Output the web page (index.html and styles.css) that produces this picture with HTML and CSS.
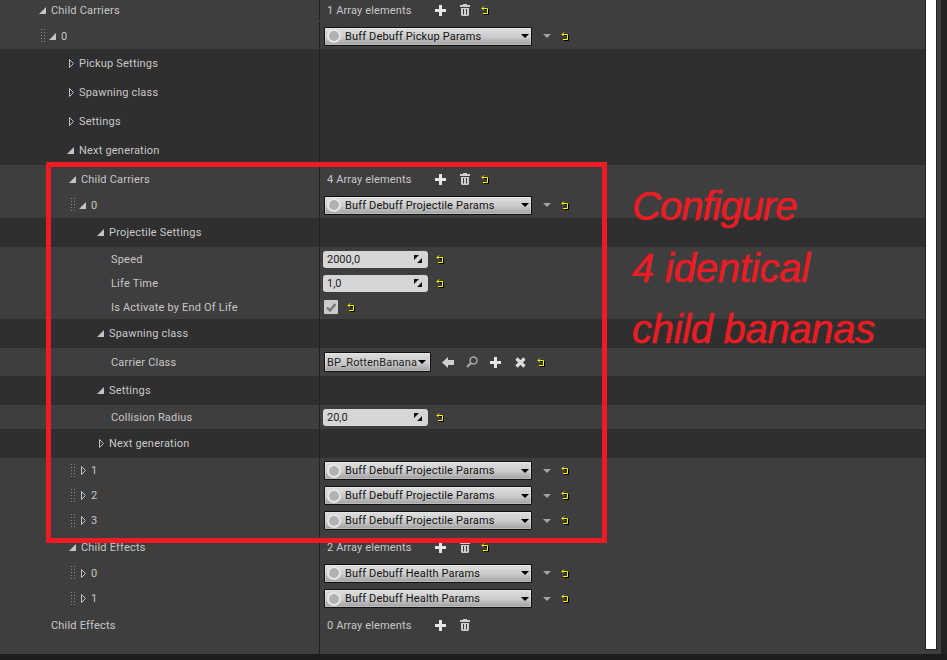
FILE: index.html
```html
<!DOCTYPE html>
<html lang="en">
<head>
  <meta charset="UTF-8" />
  <title>Child Carriers</title>
  <link rel="stylesheet" href="styles.css">
</head>
<body>

  <!-- icon sprite -->
  <svg class="sprite" xmlns="http://www.w3.org/2000/svg">
    <symbol id="open" viewBox="0 0 7 7"><path d="M7 0V7H0Z" fill="#c4c4c4"/></symbol>
    <symbol id="closed" viewBox="0 0 7 9"><path d="M2.500 .500L6.500 4.500L2.500 8.500Z" fill="none" stroke="#c4c4c4"/></symbol>
    <symbol id="grip" viewBox="0 0 5 14"><path d="M0.500 0V14M3.500 0V14" stroke="#8a8a8a" stroke-dasharray="1 2" fill="none"/></symbol>
    <symbol id="reset" viewBox="0 0 9 9">
      <path d="M1 2.500H6.500V7.500H2M3 .500L1 2.500L3 4.500" transform="translate(1 1)" fill="none" stroke="#000"/>
      <path d="M1 2.500H6.500V7.500H2M3 .500L1 2.500L3 4.500" fill="none" stroke="#f6f600"/>
    </symbol>
    <symbol id="plus" viewBox="0 0 11 11"><path d="M4 0H7V4H11V7H7V11H4V7H0V4H4Z" fill="#e6e6e6"/></symbol>
    <symbol id="trash" viewBox="0 0 10 12"><path d="M3 0H7V1H10V3H0V1H3ZM1 4H9V11L8 12H2L1 11ZM3 5V10.500H4V5ZM6 5V10.500H7V5Z" fill="#cfcfcf" fill-rule="evenodd"/></symbol>
    <symbol id="drop" viewBox="0 0 8 4"><path d="M0 0H8L4 4Z"/></symbol>
    <symbol id="spin" viewBox="0 0 8 8"><path d="M0 0H5L0 5ZM8 8H3L8 3Z" fill="#111"/></symbol>
    <symbol id="check" viewBox="0 0 14 14"><path d="M3 7.500L6 10.500L11.500 4" fill="none" stroke="#767676" stroke-width="2.400"/></symbol>
    <symbol id="back" viewBox="0 0 12 11"><path d="M6 0V3H12V8H6V11L0 5.500Z" fill="#d0d0d0"/></symbol>
    <symbol id="find" viewBox="0 0 12 12"><circle cx="7.500" cy="4.500" r="3.500" fill="none" stroke="#a8a8a8" stroke-width="1.500"/><path d="M5 7L1 11" stroke="#a8a8a8" stroke-width="2.200"/></symbol>
    <symbol id="cross" viewBox="0 0 11 11"><path d="M1.500 1.500L9.500 9.500M9.500 1.500L1.500 9.500" stroke="#dcdcdc" stroke-width="3.200"/></symbol>
  </svg>

  <div class="editor">
    <div class="main">
      <div class="rows">

        <div class="row light h22 first">
          <div class="name pad39"><svg class="arrow"><use href="#open"/></svg><span>Child Carriers</span></div>
          <div class="val"><span class="count">1 Array elements</span><svg class="ico-plus"><use href="#plus"/></svg><svg class="ico-trash"><use href="#trash"/></svg><svg class="ico-reset after-trash"><use href="#reset"/></svg></div>
        </div>
        <div class="row light h27">
          <div class="name pad41"><svg class="grip"><use href="#grip"/></svg><svg class="arrow"><use href="#open"/></svg><span>0</span></div>
          <div class="val"><div class="combo"><i class="ball"></i><span>Buff Debuff Pickup Params</span><svg class="caret"><use href="#drop"/></svg></div><svg class="more"><use href="#drop"/></svg><svg class="ico-reset after-more"><use href="#reset"/></svg></div>
        </div>

        <div class="row dark h29"><div class="name pad67"><svg class="arrow"><use href="#closed"/></svg><span>Pickup Settings</span></div><div class="val"></div></div>
        <div class="row dark h29"><div class="name pad67"><svg class="arrow"><use href="#closed"/></svg><span>Spawning class</span></div><div class="val"></div></div>
        <div class="row dark h29"><div class="name pad67"><svg class="arrow"><use href="#closed"/></svg><span>Settings</span></div><div class="val"></div></div>
        <div class="row dark h29"><div class="name pad67"><svg class="arrow"><use href="#open"/></svg><span>Next generation</span></div><div class="val"></div></div>

        <!-- next generation, nested -->
        <div class="row light h27">
          <div class="name pad69"><svg class="arrow"><use href="#open"/></svg><span>Child Carriers</span></div>
          <div class="val"><span class="count">4 Array elements</span><svg class="ico-plus"><use href="#plus"/></svg><svg class="ico-trash"><use href="#trash"/></svg><svg class="ico-reset after-trash"><use href="#reset"/></svg></div>
        </div>
        <div class="row light h26">
          <div class="name pad71"><svg class="grip"><use href="#grip"/></svg><svg class="arrow"><use href="#open"/></svg><span>0</span></div>
          <div class="val"><div class="combo"><i class="ball"></i><span>Buff Debuff Projectile Params</span><svg class="caret"><use href="#drop"/></svg></div><svg class="more"><use href="#drop"/></svg><svg class="ico-reset after-more"><use href="#reset"/></svg></div>
        </div>

        <div class="row dark h29"><div class="name pad97"><svg class="arrow"><use href="#open"/></svg><span>Projectile Settings</span></div><div class="val"></div></div>
        <div class="row light h24">
          <div class="name pad111"><span>Speed</span></div>
          <div class="val"><div class="num"><span>2000,0</span><svg class="spin"><use href="#spin"/></svg></div><svg class="ico-reset after-num"><use href="#reset"/></svg></div>
        </div>
        <div class="row light h24">
          <div class="name pad111"><span>Life Time</span></div>
          <div class="val"><div class="num"><span>1,0</span><svg class="spin"><use href="#spin"/></svg></div><svg class="ico-reset after-num"><use href="#reset"/></svg></div>
        </div>
        <div class="row light h24">
          <div class="name pad111"><span>Is Activate by End Of Life</span></div>
          <div class="val"><div class="tick"><svg class="tick-mark"><use href="#check"/></svg></div><svg class="ico-reset after-tick"><use href="#reset"/></svg></div>
        </div>

        <div class="row dark h29"><div class="name pad97"><svg class="arrow"><use href="#open"/></svg><span>Spawning class</span></div><div class="val"></div></div>
        <div class="row light h28">
          <div class="name pad111"><span>Carrier Class</span></div>
          <div class="val">
            <div class="combo small"><span>BP_RottenBanana</span><svg class="caret"><use href="#drop"/></svg></div>
            <svg class="ico-back"><use href="#back"/></svg>
            <svg class="ico-find"><use href="#find"/></svg>
            <svg class="ico-plus tool"><use href="#plus"/></svg>
            <svg class="ico-cross"><use href="#cross"/></svg>
            <svg class="ico-reset after-cross"><use href="#reset"/></svg>
          </div>
        </div>

        <div class="row dark h29"><div class="name pad97"><svg class="arrow"><use href="#open"/></svg><span>Settings</span></div><div class="val"></div></div>
        <div class="row light h24">
          <div class="name pad111"><span>Collision Radius</span></div>
          <div class="val"><div class="num"><span>20,0</span><svg class="spin"><use href="#spin"/></svg></div><svg class="ico-reset after-num"><use href="#reset"/></svg></div>
        </div>
        <div class="row dark h29"><div class="name pad97"><svg class="arrow"><use href="#closed"/></svg><span>Next generation</span></div><div class="val"></div></div>

        <div class="row light h25">
          <div class="name pad71"><svg class="grip"><use href="#grip"/></svg><svg class="arrow"><use href="#closed"/></svg><span>1</span></div>
          <div class="val"><div class="combo"><i class="ball"></i><span>Buff Debuff Projectile Params</span><svg class="caret"><use href="#drop"/></svg></div><svg class="more"><use href="#drop"/></svg><svg class="ico-reset after-more"><use href="#reset"/></svg></div>
        </div>
        <div class="row light h25">
          <div class="name pad71"><svg class="grip"><use href="#grip"/></svg><svg class="arrow"><use href="#closed"/></svg><span>2</span></div>
          <div class="val"><div class="combo"><i class="ball"></i><span>Buff Debuff Projectile Params</span><svg class="caret"><use href="#drop"/></svg></div><svg class="more"><use href="#drop"/></svg><svg class="ico-reset after-more"><use href="#reset"/></svg></div>
        </div>
        <div class="row light h25">
          <div class="name pad71"><svg class="grip"><use href="#grip"/></svg><svg class="arrow"><use href="#closed"/></svg><span>3</span></div>
          <div class="val"><div class="combo"><i class="ball"></i><span>Buff Debuff Projectile Params</span><svg class="caret"><use href="#drop"/></svg></div><svg class="more"><use href="#drop"/></svg><svg class="ico-reset after-more"><use href="#reset"/></svg></div>
        </div>

        <div class="row light h27">
          <div class="name pad69"><svg class="arrow"><use href="#open"/></svg><span>Child Effects</span></div>
          <div class="val"><span class="count">2 Array elements</span><svg class="ico-plus"><use href="#plus"/></svg><svg class="ico-trash"><use href="#trash"/></svg><svg class="ico-reset after-trash"><use href="#reset"/></svg></div>
        </div>
        <div class="row light h26">
          <div class="name pad71"><svg class="grip"><use href="#grip"/></svg><svg class="arrow"><use href="#closed"/></svg><span>0</span></div>
          <div class="val"><div class="combo"><i class="ball"></i><span>Buff Debuff Health Params</span><svg class="caret"><use href="#drop"/></svg></div><svg class="more"><use href="#drop"/></svg><svg class="ico-reset after-more"><use href="#reset"/></svg></div>
        </div>
        <div class="row light h25">
          <div class="name pad71"><svg class="grip"><use href="#grip"/></svg><svg class="arrow"><use href="#closed"/></svg><span>1</span></div>
          <div class="val"><div class="combo"><i class="ball"></i><span>Buff Debuff Health Params</span><svg class="caret"><use href="#drop"/></svg></div><svg class="more"><use href="#drop"/></svg><svg class="ico-reset after-more"><use href="#reset"/></svg></div>
        </div>
        <div class="row light h28">
          <div class="name pad51"><span>Child Effects</span></div>
          <div class="val"><span class="count">0 Array elements</span><svg class="ico-plus"><use href="#plus"/></svg><svg class="ico-trash"><use href="#trash"/></svg></div>
        </div>
        <div class="row light filler"><div class="name"></div><div class="val"></div></div>

      </div>
      <div class="track"><div class="thumb"></div></div>
      <div class="edge"></div>
    </div>
    <div class="footer"></div>

    <!-- annotation drawn over the panel -->
    <div class="callout"></div>
    <div class="note">
      <div class="line-one">Configure</div>
      <div class="line-two">4 identical</div>
      <div class="line-three">child bananas</div>
    </div>
  </div>

</body>
</html>
```

FILE: styles.css
```css
html, body {
  margin: 0;
  height: 100%;
  overflow: hidden;
  background: #1c1c1c;
}
body {
  font-family: Roboto, "Liberation Sans", sans-serif;
  font-size: 11px;
  letter-spacing: .2px;
  color: #c8c8c8;
}
.sprite {
  display: none;
}
svg {
  display: block;
  flex: none;
}
.editor {
  position: relative;
  height: 660px;
  display: flex;
  flex-direction: column;
}
.main {
  flex: 1;
  display: flex;
  min-height: 0;
}
.rows {
  flex: 1;
  display: flex;
  flex-direction: column;
  min-width: 0;
}
.track {
  width: 16px;
  background: #3e3e3e;
}
.thumb {
  width: 10px;
  height: 649px;
  background: #fff;
  border: 1px solid #222;
  border-top: 0;
}
.edge {
  width: 6px;
  background: #222;
}
.footer {
  height: 6px;
  background: #1c1c1c;
}

/* rows */
.row {
  display: flex;
  box-sizing: border-box;
}
.light { background: #3e3e3e; }
.dark { background: #2f2f2f; }
.h22 { height: 22px; }
.h24 { height: 24px; }
.h25 { height: 25px; }
.h26 { height: 26px; }
.h27 { height: 27px; padding-top: 1px; }
.h28 { height: 28px; }
.h29 { height: 29px; }
.first { padding-bottom: 2px; }
.filler { flex: 1; }

.name {
  width: calc(319px - var(--pad, 0px));
  padding-left: var(--pad, 0px);
  display: flex;
  align-items: center;
  white-space: nowrap;
  border-right: 1px solid #222;
}
.h27 .name { margin-top: -1px; padding-top: 1px; }
.pad39 { --pad: 39px; }
.pad41 { --pad: 41px; }
.pad51 { --pad: 51px; }
.pad67 { --pad: 67px; }
.pad69 { --pad: 69px; }
.pad71 { --pad: 71px; }
.pad97 { --pad: 97px; }
.pad111 { --pad: 111px; }

.arrow {
  width: 7px;
  height: 9px;
  margin-right: 5px;
}
.grip {
  width: 5px;
  height: 14px;
  margin-right: 3px;
}

.val {
  flex: 1;
  display: flex;
  align-items: center;
  padding-left: 3px;
}
.count {
  width: 112px;
  padding-left: 4px;
  box-sizing: border-box;
  letter-spacing: .14px;
  white-space: nowrap;
}

/* widgets */
.combo {
  width: 206px;
  height: 17px;
  margin-left: 1px;
  display: flex;
  align-items: center;
  color: #111;
  letter-spacing: .15px;
  background: linear-gradient(#dedede, #cacaca 55%, #a0a0a0);
  border: 1px solid #111;
  box-shadow: inset 0 0 0 1px rgba(255, 255, 255, .25);
  border-radius: 1px;
}
.combo span {
  flex: 1;
  white-space: nowrap;
}
.ball {
  width: 10px;
  height: 10px;
  margin: 0 4px 0 2px;
  border: 2px solid #e6e6e6;
  border-radius: 50%;
  background: #b2b2b2;
}
.caret {
  width: 8px;
  height: 4px;
  margin-right: 2px;
  fill: #000;
}
.more {
  width: 8px;
  height: 4px;
  margin: 0 10px 0 11px;
  fill: #a4a4a4;
}
.combo.small {
  width: 105px;
  height: 18px;
}
.combo.small span {
  padding-left: 2px;
  color: #222;
}
.combo.small .caret {
  margin-right: 4px;
}
.num {
  width: 105px;
  height: 17px;
  display: flex;
  align-items: center;
  justify-content: space-between;
  box-sizing: border-box;
  padding: 0 6px 0 4px;
  color: #222;
  letter-spacing: 0;
  background: #d6d6d6;
  border-radius: 3px;
}
.spin {
  width: 8px;
  height: 8px;
}
.tick {
  width: 14px;
  height: 14px;
  margin-left: 1px;
  background: #cbcbcb;
  border-radius: 1px;
}
.tick-mark {
  width: 14px;
  height: 14px;
}

/* icons */
.ico-reset {
  width: 9px;
  height: 9px;
}
.ico-plus {
  width: 11px;
  height: 11px;
}
.ico-trash {
  width: 10px;
  height: 12px;
  margin-left: 14px;
}
.after-trash { margin-left: 11px; }
.after-num { margin-left: 8px; }
.after-tick { margin-left: 9px; }
.after-cross { margin-left: 11px; }
.ico-back {
  width: 12px;
  height: 11px;
  margin-left: 11px;
}
.ico-find {
  width: 12px;
  height: 12px;
  margin-left: 12px;
}
.tool {
  margin-left: 12px;
}
.ico-cross {
  width: 11px;
  height: 11px;
  margin-left: 14px;
}

/* annotation */
.callout {
  position: absolute;
  left: 46px;
  top: 162px;
  width: 551px;
  height: 371px;
  border: 5px solid #ed1c24;
}
.note {
  position: absolute;
  left: 632px;
  top: 176px;
  font-family: "Liberation Sans", sans-serif;
  font-style: italic;
  font-size: 40px;
  line-height: 61.500px;
  letter-spacing: 0;
  color: #ed1c24;
  -webkit-text-stroke: .5px #ed1c24;
  white-space: nowrap;
}
.line-one { letter-spacing: -1px; }
.line-two { letter-spacing: -.2px; }
.line-three { letter-spacing: -.3px; }
```
